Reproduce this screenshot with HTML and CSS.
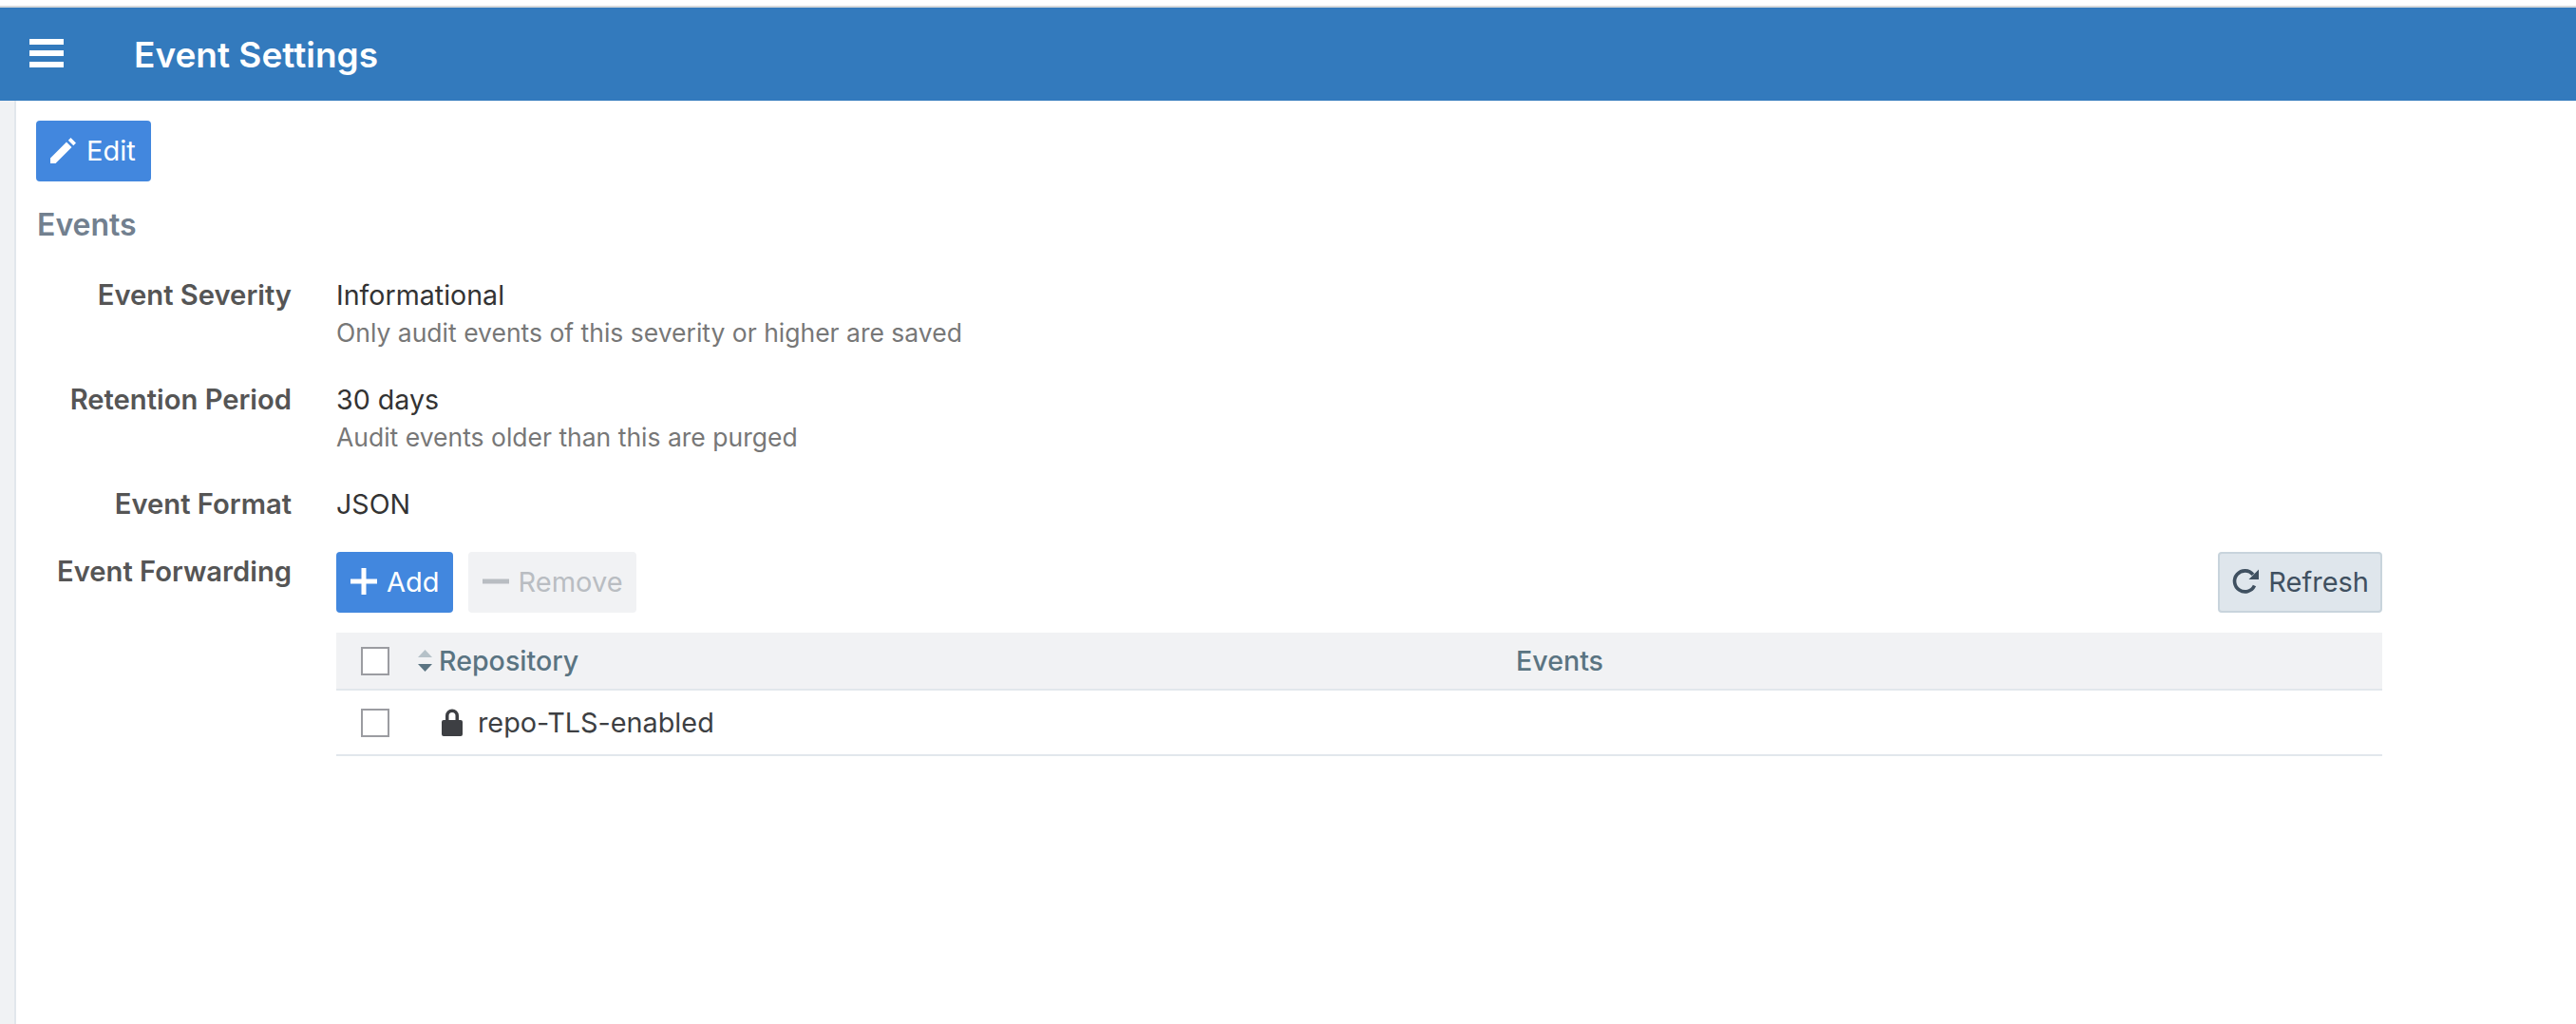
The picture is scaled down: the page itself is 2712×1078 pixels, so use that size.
FILE: index.html
```html
<!DOCTYPE html>
<html lang="en">
<head>
<meta charset="utf-8">
<title>Event Settings</title>
<link rel="stylesheet" href="styles.css">
</head>
<body>
<div class="page">
  <header class="topbar">
    <svg class="menu-icon" viewBox="0 0 36 30"><path d="M0 0h36v6H0zM0 12h36v6H0zM0 24h36v6H0z" fill="#fff"/></svg>
    <h1 class="title">Event Settings</h1>
  </header>
  <div class="body">
    <aside class="rail"></aside>
    <main class="main">
      <button class="btn btn-primary btn-edit">
        <svg class="icon" viewBox="0 0 28 28"><path d="M0 28v-5.500L17 5.500l5.500 5.500L5.500 28zM18.800 3.700L21.500 1l5.500 5.500-2.700 2.700z" fill="#fff"/></svg>
        <span>Edit</span>
      </button>
      <h2 class="section">Events</h2>
      <div class="field field-sev">
        <div class="label">Event Severity</div>
        <div class="value"><div>Informational</div><div class="hint">Only audit events of this severity or higher are saved</div></div>
      </div>
      <div class="field">
        <div class="label">Retention Period</div>
        <div class="value"><div>30 days</div><div class="hint">Audit events older than this are purged</div></div>
      </div>
      <div class="field">
        <div class="label">Event Format</div>
        <div class="value"><div>JSON</div></div>
      </div>
      <div class="field field-fwd">
        <div class="label label-fwd">Event Forwarding</div>
        <div class="value value-wide">
          <div class="toolbar">
            <button class="btn btn-primary">
              <svg class="icon icon-plus" viewBox="0 0 28 28"><path d="M11.500 0h5v11.500H28v5H16.500V28h-5V16.500H0v-5h11.500z" fill="#fff"/></svg>
              <span>Add</span>
            </button>
            <button class="btn btn-disabled">
              <svg class="icon icon-plus" viewBox="0 0 28 28"><path d="M0 11.500h28v5H0z" fill="#b9bdc2"/></svg>
              <span>Remove</span>
            </button>
            <button class="btn btn-refresh">
              <svg class="icon icon-refresh" viewBox="0 0 28 28"><path d="M23.500 18.500A11 11 0 1 1 22 6.800" fill="none" stroke="#3f5060" stroke-width="3.600"/><path d="M28 1.500V12H17.500z" fill="#3f5060"/></svg>
              <span>Refresh</span>
            </button>
          </div>
          <div class="table">
            <div class="thead">
              <span class="check"></span>
              <svg class="sort" viewBox="0 0 15 24"><path d="M7.500 0L15 8H0z" fill="#b5c1c8"/><path d="M0 15h15L7.500 23z" fill="#5a7482"/></svg>
              <span class="col-repo">Repository</span>
              <span class="col-events">Events</span>
            </div>
            <div class="trow">
              <span class="check"></span>
              <svg class="lock" viewBox="0 0 22 29"><path d="M4 12V7.500a7 7 0 0 1 14 0V12h2a2 2 0 0 1 2 2v13a2 2 0 0 1-2 2H2a2 2 0 0 1-2-2V14a2 2 0 0 1 2-2zm3.500 0h7V7.500a3.500 3.500 0 0 0-7 0z" fill="#3d3f43"/></svg>
              <span class="repo-name">repo-TLS-enabled</span>
            </div>
          </div>
        </div>
      </div>
    </main>
  </div>
</div>
</body>
</html>
```
FILE: styles.css
```css
* { box-sizing: border-box; }
html, body { margin: 0; height: 100%; background: #fff; }
body { font-family: Inter, "Liberation Sans", sans-serif; font-size: 28.6px; color: #333; overflow: hidden; }
.page { height: 100%; display: flex; flex-direction: column; padding-top: 6px; }
.topbar { height: 100px; flex: none; display: flex; align-items: center; background: #337abd; border-top: 2px solid #d8dadc; padding-left: 31px; }
.menu-icon { width: 36px; height: 30px; margin-right: 74px; position: relative; top: -1px; }
.title { margin: 0; font-size: 37px; font-weight: 600; color: #fff; line-height: 1; }
.body { flex: 1; display: flex; min-height: 0; }
.rail { width: 17px; flex: none; background: #f0f2f4; border-right: 2px solid #e2e7ec; }
.main { flex: 1; padding: 21px 0 0 21px; }
.btn { height: 64px; display: inline-flex; align-items: center; gap: 10px; border: 0; border-radius: 4px; padding: 0 14px 2px 15px; font: 400 29px Inter, "Liberation Sans", sans-serif; }
.btn-primary { background: #4287de; color: #fff; }
.btn-edit { padding-right: 16px; }
.btn-disabled { background: #f1f2f4; color: #b9bdc2; }
.btn-refresh { margin-left: auto; background: #dfe6ec; border: 2px solid #c8d4dc; color: #3f5060; padding: 0 12px 2px 13px; }
.icon { width: 28px; height: 28px; flex: none; }
.section { margin: 26px 0 0 1px; font-size: 32px; line-height: 40px; font-weight: 600; color: #72808f; }
.field { display: flex; margin-top: 30px; line-height: 40px; }
.field-sev { margin-top: 34px; }
.label { width: 269px; flex: none; text-align: right; font-size: 29.2px; font-weight: 600; color: #555; margin-right: 47px; }
.label-fwd { padding-top: 1px; }
.hint { color: #777; font-size: 26.5px; margin: -1px 0 1px; }
.value-wide { width: 2154px; }
.toolbar { display: flex; gap: 16px; }
.table { margin-top: 21px; }
.thead { height: 61px; display: flex; align-items: center; padding-left: 26px; background: #f1f2f4; border-bottom: 2px solid #e2e7ec; color: #5a7482; font-weight: 500; }
.trow { height: 69px; display: flex; align-items: center; padding-left: 26px; border-bottom: 2px solid #e2e7ec; color: #3d3f43; font-size: 28.8px; }
.check { width: 30px; height: 30px; flex: none; background: #fff; border: 2px solid #9b9ca1; }
.sort { width: 15px; height: 24px; flex: none; margin-left: 30px; margin-right: 7px; }
.col-repo { width: 1134px; flex: none; }
.lock { width: 22px; height: 29px; flex: none; margin-left: 55px; margin-right: 16px; }
```
